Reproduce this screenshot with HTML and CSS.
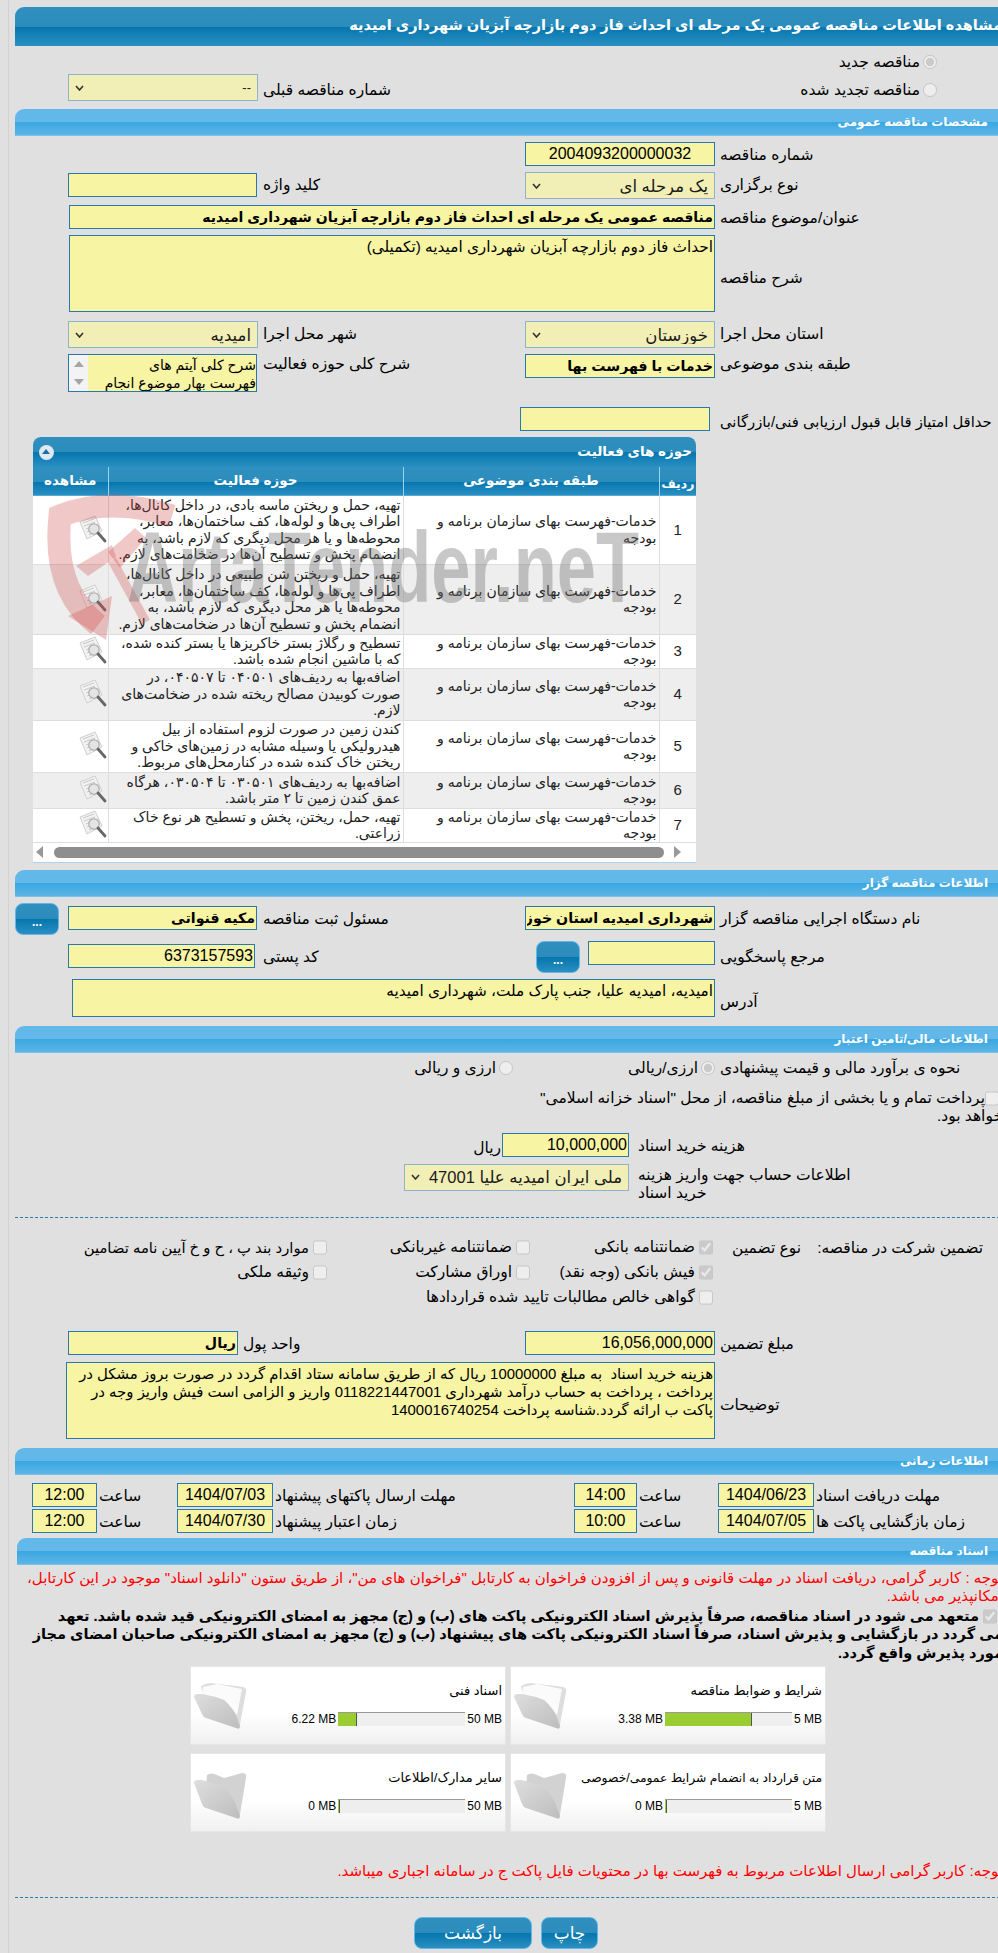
FILE: index.html
```
<!DOCTYPE html>
<html lang="fa">
<head>
<meta charset="utf-8">
<title>مشاهده اطلاعات مناقصه</title>
<link rel="stylesheet" href="styles.css">
</head>
<body>
<svg class="defs" width="0" height="0">
  <defs>
    <linearGradient id="flap" x1="0" y1="0" x2="1" y2="1">
      <stop offset="0" stop-color="#dedede"/>
      <stop offset="1" stop-color="#bdbdbd"/>
    </linearGradient>
    <symbol id="mag" viewBox="0 0 30 30">
      <path d="M2 7 L17 1 L24 16 L9 24 Z" fill="#f2f2f2" stroke="#cfcfcf"/>
      <path d="M5 8 L16 4 M6 11 L17 7 M8 14 L13 12 M9 17 L12 16 M11 20 L13 19" stroke="#c8c8c8" fill="none"/>
      <circle cx="16" cy="14" r="5.2" fill="#e4e4e4" stroke="#b0b0b0" stroke-width="1.3"/>
      <path d="M20 18 L27 26" stroke="#666" stroke-width="2.8" stroke-linecap="round"/>
    </symbol>
    <symbol id="folder" viewBox="0 0 54 50">
      <path d="M7 4 Q12 1 17 1 L49 5 Q53 6 52 10 L46 42 Q45 46 42 42 L10 20 Z" fill="#dddddd"/>
      <path d="M9 5 L23 2 L48 7 L43 33 L30 18 L8 12 Z" fill="#fbfbfb"/>
      <path d="M0 15 Q0 12 4 12 L8 12 Q20 14 30 18 Q38 25 42 33 L46 44 Q46 48 42 46 L12 36 Q9 35 8 32 Z" fill="url(#flap)"/>
    </symbol>
    <symbol id="folder-empty" viewBox="0 0 54 50">
      <path d="M13 3 Q17 0 23 3 L30 6 L48 1 Q53 1 52 6 L46 42 Q45 46 42 42 L12 18 Z" fill="#d2d2d2"/>
      <path d="M0 11 Q0 8 4 8 L8 8 Q20 11 30 16 Q38 23 42 33 L46 44 Q46 48 42 46 L12 36 Q9 35 8 32 Z" fill="url(#flap)"/>
    </symbol>
  </defs>
</svg>
<div class="page">
  <h1 class="title">مشاهده اطلاعات مناقصه عمومی یک مرحله ای احداث فاز دوم بازارچه آبزیان شهرداری امیدیه</h1>

  <div class="form top">
    <label class="radio one"><input type="radio" disabled checked>مناقصه جدید</label>
    <label class="radio one"><input type="radio" disabled>مناقصه تجدید شده</label>
    <span class="lab">شماره مناقصه قبلی</span>
    <select class="sel" disabled><option>--</option></select>
  </div>

  <h2 class="bar">مشخصات مناقصه عمومی</h2>
  <div class="form general">
    <span class="lab">شماره مناقصه</span>
    <input class="inp ctr w190" value="2004093200000032" readonly>
    <span></span><span></span>

    <span class="lab">نوع برگزاری</span>
    <select class="sel big" disabled><option>یک مرحله ای</option></select>
    <span class="lab">کلید واژه</span>
    <input class="inp w189 down1" readonly>

    <span class="lab">عنوان/موضوع مناقصه</span>
    <input class="inp bold subject span3 w646" value="مناقصه عمومی یک مرحله ای احداث فاز دوم بازارچه آبزیان شهرداری امیدیه" readonly>

    <span class="lab mid">شرح مناقصه</span>
    <textarea class="inp area span3 w646 h77" readonly>احداث فاز دوم بازارچه آبزیان شهرداری امیدیه (تکمیلی)</textarea>

    <span class="lab">استان محل اجرا</span>
    <select class="sel big" disabled><option>خوزستان</option></select>
    <span class="lab">شهر محل اجرا</span>
    <select class="sel big" disabled><option>امیدیه</option></select>

    <span class="lab lh20">طبقه بندی موضوعی</span>
    <input class="inp bold w190" value="خدمات با فهرست بها" readonly>
    <span class="lab lh20">شرح کلی حوزه فعالیت</span>
    <div class="listbox">
      <div class="listtext">شرح کلی آیتم های<br>فهرست بهار موضوع انجام</div>
      <div class="liststrip"><i class="up"></i><i class="dn"></i></div>
    </div>

    <span class="lab wide">حداقل امتیاز قابل قبول ارزیابی فنی/بازرگانی</span>
    <input class="inp w190 shift5" readonly>
  </div>

  <div class="tablewrap">
    <div class="tablehead"><span>حوزه های فعالیت</span><i class="collapse"></i></div>
    <table class="grid">
      <thead>
        <tr><th class="c1">ردیف</th><th class="c2">طبقه بندی موضوعی</th><th class="c3">حوزه فعالیت</th><th class="c4">مشاهده</th></tr>
      </thead>
      <tbody>
        <tr><td class="n">1</td><td class="t">خدمات-فهرست بهای سازمان برنامه و<br>بودجه</td><td class="t">تهیه، حمل و ریختن ماسه بادی، در داخل کانال‌ها،<br>اطراف پی‌ها و لوله‌ها، کف ساختمان‌ها، معابر،<br>محوطه‌ها و یا هر محل دیگری که لازم باشد، به<br>انضمام پخش و تسطیح آن‌ها در ضخامت‌های لازم.</td><td class="v"><svg class="mag"><use href="#mag"/></svg></td></tr>
        <tr><td class="n">2</td><td class="t">خدمات-فهرست بهای سازمان برنامه و<br>بودجه</td><td class="t">تهیه، حمل و ریختن شن طبیعی در داخل کانال‌ها،<br>اطراف پی‌ها و لوله‌ها، کف ساختمان‌ها، معابر،<br>محوطه‌ها یا هر محل دیگری که لازم باشد، به<br>انضمام پخش و تسطیح آن‌ها در ضخامت‌های لازم.</td><td class="v"><svg class="mag"><use href="#mag"/></svg></td></tr>
        <tr><td class="n">3</td><td class="t">خدمات-فهرست بهای سازمان برنامه و<br>بودجه</td><td class="t">تسطیح و رگلاژ بستر خاکریزها یا بستر کنده شده،<br>که با ماشین انجام شده باشد.</td><td class="v"><svg class="mag"><use href="#mag"/></svg></td></tr>
        <tr><td class="n">4</td><td class="t">خدمات-فهرست بهای سازمان برنامه و<br>بودجه</td><td class="t">اضافه‌بها به ردیف‌های ۰۴۰۵۰۱ تا ۰۴۰۵۰۷، در<br>صورت کوبیدن مصالح ریخته شده در ضخامت‌های<br>لازم.</td><td class="v"><svg class="mag"><use href="#mag"/></svg></td></tr>
        <tr><td class="n">5</td><td class="t">خدمات-فهرست بهای سازمان برنامه و<br>بودجه</td><td class="t">کندن زمین در صورت لزوم استفاده از بیل<br>هیدرولیکی یا  وسیله مشابه در زمین‌های خاکی و<br>ریختن خاک کنده شده در کنارمحل‌های مربوط.</td><td class="v"><svg class="mag"><use href="#mag"/></svg></td></tr>
        <tr><td class="n">6</td><td class="t">خدمات-فهرست بهای سازمان برنامه و<br>بودجه</td><td class="t">اضافه‌بها به ردیف‌های ۰۳۰۵۰۱ تا ۰۳۰۵۰۴، هرگاه<br>عمق کندن  زمین تا ۲ متر باشد.</td><td class="v"><svg class="mag"><use href="#mag"/></svg></td></tr>
        <tr><td class="n">7</td><td class="t">خدمات-فهرست بهای سازمان برنامه و<br>بودجه</td><td class="t">تهیه، حمل، ریختن، پخش و تسطیح هر نوع خاک<br>زراعتی.</td><td class="v"><svg class="mag"><use href="#mag"/></svg></td></tr>
      </tbody>
    </table>
    <div class="hscroll"><i class="sl"></i><div class="thumb"></div><i class="sr"></i></div>
    <svg class="wm" viewBox="33 437 663 425" width="663" height="425">
      <g class="wm-red">
        <path d="M172 516 Q110 496 60 516 Q52 590 98 625" class="wm-band"/>
        <polygon points="106,640 68,616 112,596"/>
        <polygon points="76,566 112,545 116,557 88,576"/>
        <polygon points="108,552 135,528 146,538 120,568"/>
        <path d="M112 560 L146 622" class="wm-thin"/>
      </g>
      <text x="127" y="602" class="wm-text" textLength="512" lengthAdjust="spacingAndGlyphs">ArtaTender.neT</text>
    </svg>
  </div>

  <h2 class="bar sec2">اطلاعات مناقصه گزار</h2>
  <div class="form owner">
    <span class="lab p3">نام دستگاه اجرایی مناقصه گزار</span>
    <input class="inp bold w190 down3" value="شهرداری امیدیه استان خوزستان" readonly>
    <span class="lab p3">مسئول ثبت مناقصه</span>
    <input class="inp bold w189 down3" value="مکیه قنواتی" readonly>
    <button class="btn dots end" type="button">...</button>

    <span class="lab p3">مرجع پاسخگویی</span>
    <div class="pair">
      <input class="inp w127" readonly>
      <button class="btn dots" type="button">...</button>
    </div>
    <span class="lab p3">کد پستی</span>
    <input class="inp w187 ltrval down3 shift2" value="6373157593" readonly>
    <span></span>

    <span class="lab mid">آدرس</span>
    <textarea class="inp area span3 w643 h38" readonly>امیدیه، امیدیه علیا، جنب پارک ملت، شهرداری امیدیه</textarea>
  </div>

  <h2 class="bar">اطلاعات مالی/تامین اعتبار</h2>
  <div class="form finance">
    <span class="lab">نحوه ی برآورد مالی و قیمت پیشنهادی</span>
    <div class="opts">
      <label class="radio opt"><input type="radio" disabled checked>ارزی/ریالی</label>
      <label class="radio"><input type="radio" disabled>ارزی و ریالی</label>
    </div>
  </div>
  <div class="treasury">
    <input class="check lead" type="checkbox" disabled>پرداخت تمام و یا بخشی از مبلغ مناقصه، از محل "اسناد خزانه اسلامی"<br>خواهد بود.
  </div>
  <div class="form fee">
    <span class="lab">هزینه خرید اسناد</span>
    <div class="pair tight">
      <input class="inp w127" value="10,000,000" readonly>
      <span class="unit">ریال</span>
    </div>
    <span class="lab two">اطلاعات حساب جهت واریز هزینه<br>خرید اسناد</span>
    <select class="sel big w225" disabled><option>ملی ایران امیدیه علیا 47001</option></select>
  </div>
  <hr class="dash">
  <div class="guar">
    <div class="gcap"><span>تضمین شرکت در مناقصه:</span><span>نوع تضمین</span></div>
    <label class="ck"><input class="check" type="checkbox" disabled checked>ضمانتنامه بانکی</label>
    <label class="ck"><input class="check" type="checkbox" disabled>ضمانتنامه غیربانکی</label>
    <label class="ck tighter"><input class="check" type="checkbox" disabled>موارد بند پ ، ح و خ آیین نامه تضامین</label>
    <div></div>
    <label class="ck"><input class="check" type="checkbox" disabled checked>فیش بانکی (وجه نقد)</label>
    <label class="ck"><input class="check" type="checkbox" disabled>اوراق مشارکت</label>
    <label class="ck"><input class="check" type="checkbox" disabled>وثیقه ملکی</label>
    <div></div>
    <label class="ck wideck"><input class="check" type="checkbox" disabled>گواهی خالص مطالبات تایید شده قراردادها</label>
  </div>
  <div class="form amount">
    <span class="lab">مبلغ تضمین</span>
    <input class="inp w190" value="16,056,000,000" readonly>
    <span class="lab">واحد پول</span>
    <input class="inp bold w170" value="ریال" readonly>
    <span class="lab mid">توضیحات</span>
    <textarea class="inp area note-area span3 w649 h77" readonly>هزینه خرید اسناد  به مبلغ 10000000 ریال که از طریق سامانه ستاد اقدام گردد در صورت بروز مشکل در
پرداخت ، پرداخت به حساب درآمد شهرداری 0118221447001 واریز و الزامی است فیش واریز وجه در
پاکت ب ارائه گردد.شناسه پرداخت 1400016740254</textarea>
  </div>

  <h2 class="bar">اطلاعات زمانی</h2>
  <div class="times">
    <span class="lab">مهلت دریافت اسناد</span><input class="inp ctr" value="1404/06/23" readonly>
    <span class="lab">ساعت</span><input class="inp ctr" value="14:00" readonly>
    <span class="lab">مهلت ارسال پاکتهای پیشنهاد</span><input class="inp ctr" value="1404/07/03" readonly>
    <span class="lab">ساعت</span><input class="inp ctr" value="12:00" readonly>
    <span class="lab">زمان بازگشایی پاکت ها</span><input class="inp ctr" value="1404/07/05" readonly>
    <span class="lab">ساعت</span><input class="inp ctr" value="10:00" readonly>
    <span class="lab">زمان اعتبار پیشنهاد</span><input class="inp ctr" value="1404/07/30" readonly>
    <span class="lab">ساعت</span><input class="inp ctr" value="12:00" readonly>
  </div>

  <h2 class="bar docs">اسناد مناقصه</h2>
  <p class="red first">توجه : کاربر گرامی، دریافت اسناد در مهلت قانونی و پس از افزودن فراخوان به کارتابل "فراخوان های من"، از طریق ستون "دانلود اسناد" موجود در این کارتابل،<br>امکانپذیر می باشد.</p>
  <p class="pledge"><input class="check lead2" type="checkbox" disabled checked> متعهد می شود در اسناد مناقصه، صرفاً پذیرش اسناد الکترونیکی پاکت های (ب) و (ج) مجهز به امضای الکترونیکی قید شده باشد. تعهد<br>می گردد در بازگشایی و پذیرش اسناد، صرفاً اسناد الکترونیکی پاکت های پیشنهاد (ب) و (ج) مجهز به امضای الکترونیکی صاحبان امضای مجاز<br>مورد پذیرش واقع گردد.</p>

  <div class="cards">
    <div class="card">
      <div class="cbody">
        <div class="ctitle">شرایط و ضوابط مناقصه</div>
        <div class="meter"><span>5 MB</span><div class="track"><div class="fill" style="width:68%"></div></div><span>3.38 MB</span></div>
      </div>
      <svg class="fold"><use href="#folder"/></svg>
    </div>
    <div class="card">
      <div class="cbody">
        <div class="ctitle">اسناد فنی</div>
        <div class="meter"><span>50 MB</span><div class="track"><div class="fill" style="width:14%"></div></div><span>6.22 MB</span></div>
      </div>
      <svg class="fold"><use href="#folder"/></svg>
    </div>
    <div class="card">
      <div class="cbody">
        <div class="ctitle long">متن قرارداد به انضمام شرایط عمومی/خصوصی</div>
        <div class="meter"><span>5 MB</span><div class="track"><div class="fill" style="width:0"></div></div><span>0 MB</span></div>
      </div>
      <svg class="fold low"><use href="#folder-empty"/></svg>
    </div>
    <div class="card">
      <div class="cbody">
        <div class="ctitle">سایر مدارک/اطلاعات</div>
        <div class="meter"><span>50 MB</span><div class="track"><div class="fill" style="width:0"></div></div><span>0 MB</span></div>
      </div>
      <svg class="fold low"><use href="#folder-empty"/></svg>
    </div>
  </div>

  <p class="red note">توجه: کاربر گرامی ارسال اطلاعات مربوط به فهرست بها در محتویات فایل پاکت ج در سامانه اجباری میباشد.</p>
  <hr class="dash dash2">
  <div class="actions">
    <button class="btn act small" type="button">چاپ</button>
    <button class="btn act" type="button">بازگشت</button>
  </div>
</div>
</body>
</html>
```

FILE: styles.css
```
html, body { margin: 0; padding: 0; overflow-x: hidden; }
body {
  width: 998px;
  background: #e0e0e0;
  font-family: "Liberation Sans", "DejaVu Sans", sans-serif;
  font-size: 15.5px;
  color: #000;
}
.defs { position: absolute; }
.page {
  direction: rtl;
  width: 997px;
  height: 1953px;
  box-sizing: border-box;
  margin-left: 8px;
  padding: 7px 0 0 6px;
  border-left: 1px solid #d2d2d2;
}
.title {
  margin: 0;
  height: 39px;
  line-height: 37px;
  padding-right: 3px;
  font-size: 14.5px;
  font-weight: bold;
  color: #fff;
  white-space: nowrap;
  border-radius: 9px 0 0 0;
  background: linear-gradient(#2f90bf 0, #2c8dbd 50%, #0576ae 51%, #2a8fc2 100%);
}
.bar {
  margin: 0;
  height: 27px;
  line-height: 27px;
  padding-right: 17px;
  font-size: 12px;
  font-weight: bold;
  color: #fff;
  border-radius: 9px 0 0 0;
  background: linear-gradient(#62b9e9 0, #62b9e9 48%, #3aa7e1 50%, #5db5e6 97%, #a6d6ef 100%);
}
.lab { text-align: left; padding-left: 5px; line-height: 26px; white-space: nowrap; }
.mid { align-self: center; }
.wide { padding-left: 5px; font-size: 14.8px; line-height: 30px; }
.lh20 { line-height: 20px; }

.form {
  display: grid;
  grid-template-columns: 290px 190px 267px 190px;
  align-items: start;
}
.top { grid-template-rows: 28px 35px; }
.top .radio.one { padding-right: 68px; padding-top: 4px; grid-column: 1 / 3; }
.top .radio.one:first-child { grid-column: 1 / -1; padding-top: 4px; }
.top .lab { line-height: 31px; }
.general { padding-top: 6px; grid-template-rows: 30px 33px 30px 86px 33px 53px 30px; }
.span3 { grid-column: 2 / 5; }
.owner { grid-template-columns: 290px 190px 267px 190px 53px; padding-top: 6px; grid-template-rows: 38px 38px 47px; }
.finance { padding-top: 2px; grid-template-rows: 26px; }
.fee { grid-template-columns: 376px 300px; grid-template-rows: 31px 53px; margin-top: 8px; }
.fee .lab { padding-left: 9px; }
.two { line-height: 18px; padding-top: 2px; }
.amount { grid-template-columns: 290px 190px 287px 170px; grid-template-rows: 31px 86px; margin-top: 21px; }

.inp {
  box-sizing: border-box;
  display: block;
  height: 24px;
  margin: 0;
  padding: 0 1px;
  font-family: inherit;
  font-size: 16px;
  color: #000;
  text-align: right;
  direction: rtl;
  background: #f7f4a4;
  border: 1px solid #2a79ad;
  border-radius: 0;
  outline: none;
}
.bold { font-weight: bold; font-size: 14.2px; }
.subject { font-size: 14px; }
.area { font-size: 15.3px; line-height: 18px; resize: none; padding: 2px 1px 0; overflow: hidden; }
.note-area { white-space: pre; font-size: 14.9px; }
.ctr { text-align: center; }
.ltrval { padding-left: 2px; }
.w127 { width: 127px; }
.w170 { width: 170px; }
.w187 { width: 187px; }
.w189 { width: 189px; margin-right: 1px; }
.w190 { width: 190px; }
.w643 { width: 643px; }
.w646 { width: 646px; }
.w649 { width: 649px; }
.h77 { height: 77px; }
.h38 { height: 38px; }
.down1 { margin-top: 1px; }
.down3 { margin-top: 3px; }
.shift5 { margin-right: 5px; }
.shift2 { margin-right: 3px; }
.p3 { padding-top: 3px; }

.sel {
  appearance: none;
  -webkit-appearance: none;
  box-sizing: border-box;
  display: block;
  width: 190px;
  height: 27px;
  margin: 0;
  padding: 0 6px 0 20px;
  font-family: inherit;
  font-size: 13px;
  color: #1a1a1a;
  opacity: 1;
  text-align: right;
  direction: rtl;
  border: 1px solid #8fb3c9;
  border-radius: 0;
  background: #f1eeb6 url("data:image/svg+xml,%3Csvg xmlns='http://www.w3.org/2000/svg' width='9' height='6'%3E%3Cpath d='M1 1l3.5 4L8 1' fill='none' stroke='%23333' stroke-width='1.6'/%3E%3C/svg%3E") no-repeat 6px 50%;
}
.big { font-size: 16.5px; }
.w225 { width: 225px; }

.radio { display: flex; align-items: center; white-space: nowrap; height: 24px; }
.radio input { margin: 0 0 0 3px; width: 14px; height: 14px; }
.opts { display: flex; grid-column: 2 / -1; padding-top: 1px; }
.opt { width: 202px; }

.listbox {
  display: flex;
  box-sizing: border-box;
  width: 189px;
  height: 38px;
  margin-right: 1px;
  border: 1px solid #2a79ad;
  background: #f7f4a4;
  overflow: hidden;
}
.listtext { flex: 1; line-height: 18px; white-space: nowrap; overflow: hidden; font-size: 14px; padding-top: 1px; }
.liststrip { width: 19px; background: #f3f3f3; display: flex; flex-direction: column; justify-content: space-around; align-items: center; }
.up { border: 5px solid transparent; border-top: 0; border-bottom: 6px solid #a5a5a5; }
.dn { border: 5px solid transparent; border-bottom: 0; border-top: 6px solid #a5a5a5; }

.tablewrap {
  position: relative;
  width: 663px;
  margin-right: 309px;
  background: #fff;
  border-radius: 8px 8px 0 0;
}
.tablehead {
  height: 30px;
  line-height: 30px;
  padding: 0 4px 0 6px;
  display: flex;
  justify-content: space-between;
  align-items: center;
  color: #fff;
  font-weight: bold;
  font-size: 13.5px;
  border-radius: 8px 8px 0 0;
  background: linear-gradient(#2f90bf 0, #2c8dbd 50%, #0576ae 51%, #2a8fc2 100%);
}
.collapse {
  position: relative;
  width: 15px;
  height: 15px;
  border-radius: 50%;
  background: #e0e8f2;
}
.collapse::after {
  content: "";
  position: absolute;
  left: 3px;
  top: 4px;
  border: 4.5px solid transparent;
  border-top: 0;
  border-bottom: 5px solid #1a6fa3;
}
.grid { width: 663px; border-collapse: collapse; table-layout: fixed; }
.grid th {
  height: 29px;
  padding: 0 0 4px;
  box-sizing: border-box;
  color: #fff;
  font-size: 13.5px;
  font-weight: bold;
  background: linear-gradient(#2f90bf 0, #2c8dbd 50%, #0576ae 51%, #2a8fc2 97%, #8ed0f0 100%);
  border-left: 1px solid #9bd2f0;
}
.grid th:last-child { border-left: 0; }
.grid th.c1 { font-size: 12.5px; padding: 3px 0 0; }
.c1 { width: 37px; }
.c2 { width: 256px; }
.c3 { width: 295px; }
.c4 { width: 75px; }
.grid td {
  padding: 0 2px;
  line-height: 16.5px;
  font-size: 14px;
  color: #222;
  border-left: 1px solid #ddd;
  border-bottom: 1px solid #ddd;
}
.grid td:last-child { border-left: 0; }
.grid tbody tr:nth-child(even) td { background: #eee; }
.grid tbody tr:nth-child(1) { height: 68px; }
.grid tbody tr:nth-child(2) { height: 70px; }
.grid tbody tr:nth-child(3) { height: 34px; }
.grid tbody tr:nth-child(4) { height: 52px; }
.grid tbody tr:nth-child(5) { height: 52px; }
.grid tbody tr:nth-child(6) { height: 36px; }
.grid tbody tr:nth-child(7) { height: 34px; }
.grid .n { text-align: center; font-size: 15px; }
.grid .v { text-align: left; padding: 0; line-height: 0; }
.mag { width: 30px; height: 30px; margin-left: 45px; }
.hscroll {
  direction: ltr;
  height: 20px;
  display: flex;
  align-items: center;
  padding: 0 3px;
  background: #fff;
  border-bottom: 1px solid #a8d3ec;
  box-sizing: border-box;
}
.thumb { height: 11px; width: 610px; margin: 0 10px 0 11px; border-radius: 6px; background: #8e8e8e; }
.sl { border: 6px solid transparent; border-left: 0; border-right: 7px solid #999; }
.sr { border: 6px solid transparent; border-right: 0; border-left: 7px solid #999; }
.wm { position: absolute; left: 0; top: 0; pointer-events: none; direction: ltr; }
.wm-red { fill: #d24a4a; fill-opacity: .3; }
.wm-band { fill: none; stroke: #d24a4a; stroke-opacity: .3; stroke-width: 23; }
.wm-thin { fill: none; stroke: #d24a4a; stroke-opacity: .3; stroke-width: 9; }
.wm-text { font-family: "Liberation Sans", sans-serif; font-size: 100px; font-weight: bold; fill: #6f6f6f; fill-opacity: .38; direction: ltr; }

.sec2 { margin-top: 7px; }
.pair { display: flex; gap: 8px; }
.tight { gap: 1px; }
.unit { line-height: 30px; }
.btn {
  font-family: inherit;
  color: #fff;
  border: 1px solid #63b7e6;
  border-radius: 8px;
  padding: 0;
  background: linear-gradient(#2f90bf 0, #2c8dbd 50%, #0576ae 51%, #2a8fc2 100%);
}
.dots { width: 44px; height: 32px; font-size: 12px; font-weight: bold; padding-top: 7px; }
.end { justify-self: end; }

.treasury { padding: 0 2px 0 0; line-height: 18px; margin-top: 8px; height: 36px; white-space: nowrap; }
.check { width: 14px; height: 15px; margin: 0; vertical-align: middle; }
.lead { margin-right: 4px; }
.lead2 { margin-right: 6px; }
.dash { border: 0; border-top: 1px dashed #2a7ca8; margin: 0; height: 0; }
.guar {
  display: grid;
  grid-template-columns: 292px 183px 203px 300px;
  grid-auto-rows: 25px;
  margin-top: 17px;
}
.gcap { display: flex; gap: 16px; padding-right: 22px; line-height: 25px; white-space: nowrap; }
.ck { display: flex; align-items: center; gap: 4px; white-space: nowrap; }
.tighter { font-size: 14.8px; }
.wideck { grid-column: 2 / -1; }

.times {
  display: grid;
  grid-template-columns: 191px 96px 81px 63px 301px 96px 80px 65px;
  grid-auto-rows: 26px;
  padding-top: 8px;
  height: 55px;
}
.times .inp { width: 100%; }
.times .lab { padding-left: 2px; }
.docs { margin-left: 2px; }
.red { margin: 0; color: #f00; white-space: nowrap; font-size: 15px; }
.first { line-height: 18px; padding-top: 4px; padding-right: 2px; }
.pledge { margin: 2px 0 0; padding-right: 2px; line-height: 18.5px; font-weight: bold; font-size: 14.6px; white-space: nowrap; }
.cards {
  display: grid;
  grid-template-columns: 316px 316px;
  grid-auto-rows: 79px;
  gap: 8px 4px;
  margin: 4px 179px 0 0;
}
.card {
  display: flex;
  box-sizing: border-box;
  padding: 0 3px;
  border: 1px solid #e6e6e6;
  background: linear-gradient(#fff 0, #fff 60%, #f0f0f0 100%);
}
.cbody { flex: 1; }
.ctitle { margin-top: 14px; height: 20px; line-height: 20px; font-size: 13px; white-space: nowrap; }
.long { font-size: 12.3px; }
.meter { display: flex; align-items: center; gap: 2px; margin-top: 11px; font-size: 12px; direction: rtl; }
.meter span { direction: ltr; line-height: 14px; }
.track { direction: ltr; width: 127px; height: 14px; box-sizing: border-box; background: #eee; border-top: 1px solid #999; }
.fill { height: 100%; min-width: 1px; background: #9acd32; border-right: 1px solid #555; }
.fold { width: 54px; height: 50px; margin-top: 15px; flex: none; }
.low { margin-top: 18px; }
.note { margin-top: 30px; line-height: 18px; padding-right: 2px; }
.dash2 { margin-top: 17px; }
.actions { display: flex; gap: 9px; padding: 19px 407px 0 0; }
.act { width: 118px; height: 32px; font-size: 17px; }
.small { width: 57px; }
```
